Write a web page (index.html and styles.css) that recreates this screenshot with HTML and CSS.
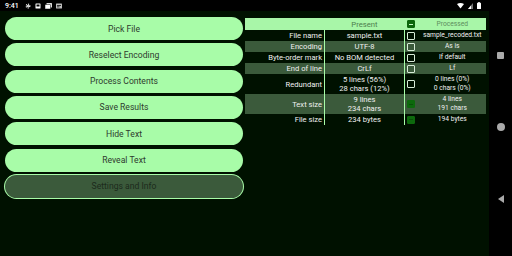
FILE: index.html
```html
<!DOCTYPE html>
<html lang="en">
  <head>
    <meta charset="UTF-8" />
    <meta name="viewport" content="width=device-width, initial-scale=1.0" />
    <title>Recoder</title>
    <link rel="stylesheet" href="styles.css">
  </head>
  <body>
    <div class="statusbar">
      <span class="time">9:41</span>
      <svg class="sicon" width="6" height="6" viewBox="0 0 12 12">
        <circle cx="6" cy="6" r="3.6" fill="none" stroke="#fff" stroke-width="2.4" stroke-dasharray="2 1.8" />
        <circle cx="6" cy="6" r="2.2" fill="#fff" />
      </svg>
      <svg class="sicon" width="6" height="6" viewBox="0 0 12 12">
        <rect x="1" y="1" width="10" height="10" rx="1" fill="#fff" />
        <rect x="3" y="3" width="6" height="4" fill="#000" />
      </svg>
      <svg class="sicon" width="7" height="6" viewBox="0 0 14 12">
        <rect x="3" y="0" width="11" height="9" rx="1" fill="#ddd" />
        <rect x="0" y="3" width="11" height="9" rx="1" fill="#fff" stroke="#000" stroke-width="1" />
      </svg>
      <svg class="sicon" width="6" height="6" viewBox="0 0 12 12">
        <rect x="0" y="1" width="12" height="10" rx="1" fill="#bbb" />
        <rect x="2" y="4" width="8" height="1.5" fill="#000" />
        <rect x="2" y="7" width="5" height="1.5" fill="#000" />
      </svg>
      <span class="spacer"></span>
      <svg class="sicon" width="7" height="6" viewBox="0 0 14 12">
        <path d="M0 2 Q7 -2 14 2 L7 11 Z" fill="#fff" />
      </svg>
      <svg class="sicon" width="5" height="6" viewBox="0 0 10 12">
        <path d="M10 0 L10 12 L0 12 Z" fill="#777" />
        <path d="M6 5 L6 12 L0 12 Z" fill="#fff" />
      </svg>
      <svg class="sicon" width="4" height="7" viewBox="0 0 8 14">
        <rect x="2.5" y="0" width="3" height="2" fill="#fff" />
        <rect x="0" y="1.5" width="8" height="12.5" rx="1" fill="#fff" />
      </svg>
    </div>

    <div class="content">
      <div class="app">
        <div class="buttons">
          <button class="btn">Pick File</button>
          <button class="btn">Reselect Encoding</button>
          <button class="btn">Process Contents</button>
          <button class="btn">Save Results</button>
          <button class="btn">Hide Text</button>
          <button class="btn">Reveal Text</button>
          <button class="btn btn_muted">Settings and Info</button>
        </div>

        <table class="info">
          <tr class="head">
            <td></td>
            <td class="present">Present</td>
            <td class="check"><span class="box box_head"></span></td>
            <td class="processed">Processed</td>
          </tr>
          <tr>
            <td class="label">File name</td>
            <td class="present">sample.txt</td>
            <td class="check"><span class="box"></span></td>
            <td class="processed">sample_recoded.txt</td>
          </tr>
          <tr class="alt">
            <td class="label">Encoding</td>
            <td class="present">UTF-8</td>
            <td class="check"><span class="box"></span></td>
            <td class="processed">As is</td>
          </tr>
          <tr>
            <td class="label">Byte-order mark</td>
            <td class="present">No BOM detected</td>
            <td class="check"><span class="box"></span></td>
            <td class="processed">If default</td>
          </tr>
          <tr class="alt">
            <td class="label">End of line</td>
            <td class="present">CrLf</td>
            <td class="check"><span class="box"></span></td>
            <td class="processed">Lf</td>
          </tr>
          <tr>
            <td class="label">Redundant</td>
            <td class="present">5 lines (56%)<br>28 chars (12%)</td>
            <td class="check"><span class="box"></span></td>
            <td class="processed">0 lines (0%)<br>0 chars (0%)</td>
          </tr>
          <tr class="alt">
            <td class="label">Text size</td>
            <td class="present">9 lines<br>234 chars</td>
            <td class="check"><span class="box box_fixed"></span></td>
            <td class="processed">4 lines<br>191 chars</td>
          </tr>
          <tr>
            <td class="label">File size</td>
            <td class="present">234 bytes</td>
            <td class="check"><span class="box box_fixed"></span></td>
            <td class="processed">194 bytes</td>
          </tr>
        </table>
      </div>

      <div class="navbar">
        <span class="nav_square"></span>
        <span class="nav_circle"></span>
        <span class="nav_back"></span>
      </div>
    </div>
  </body>
</html>
```

FILE: styles.css
```css
html,
body {
  margin: 0;
  padding: 0;
}

body {
  width: 512px;
  height: 256px;
  overflow: hidden;
  background-color: #000;
  font-family: Roboto, "Liberation Sans", sans-serif;
  display: flex;
  flex-direction: column;
}

.statusbar {
  height: 11px;
  display: flex;
  align-items: center;
  gap: 4px;
  padding: 0 31px 0 5px;
  color: #fff;
}

.time {
  font-size: 7px;
  font-weight: 500;
  margin-right: 2px;
}

.sicon {
  display: block;
}

.spacer {
  flex: 1;
}

.content {
  flex: 1;
  display: flex;
}

.app {
  width: 489px;
  background-color: #001100;
  display: flex;
  align-items: flex-start;
  padding: 6px 0 0 5px;
  box-sizing: border-box;
}

.buttons {
  width: 238px;
  display: flex;
  flex-direction: column;
  gap: 3.33px;
}

.btn {
  height: 23px;
  border: none;
  border-radius: 12px;
  background-color: #a8fca8;
  color: #2e3a2e;
  font-family: Roboto, "Liberation Sans", sans-serif;
  font-size: 8.6px;
  padding: 0;
}

.btn_muted {
  background-color: #3b5a3b;
  color: #1c2a1c;
  box-shadow: 0 0 0 1px #a8fca8;
}

.info {
  margin: 1px 0 0 2px;
  width: 241px;
  border-collapse: collapse;
  font-size: 7.6px;
  line-height: 9px;
  color: #f0f0f0;
}

.info td {
  padding: 1px 0;
  text-align: center;
  vertical-align: middle;
}

.info td.label {
  width: 77px;
  text-align: right;
  padding-right: 2px;
  border-right: 1px solid #a8fca8;
}

.info td.present {
  width: 79px;
  border-right: 1px solid #a8fca8;
}

.info td.check {
  width: 12px;
  padding-left: 2px;
  text-align: left;
}

.info td.processed {
  font-size: 6.7px;
}

.info .head td {
  background-color: #a8f6a8;
  height: 10px;
  border-right: none;
}

.info .head .present {
  color: #4d7d4d;
  font-size: 7.7px;
}

.info .head .processed {
  color: #5e8e5e;
}

.alt td {
  background-color: #3b5a3b;
}

.box {
  display: block;
  width: 6px;
  height: 6px;
  border: 1px solid #d8ecd8;
  border-radius: 1px;
  background-color: #001100;
}

.alt .box {
  background-color: #3b5a3b;
}

.box_head {
  background-color: #0b650b;
  border-color: #0b650b;
  position: relative;
}

.box_head::after {
  content: "";
  position: absolute;
  left: 1px;
  right: 1px;
  top: 2.5px;
  height: 1px;
  background-color: #c8f8c8;
}

.box_fixed,
.alt .box_fixed {
  background-color: #0d6a0d;
  border-color: #0d6a0d;
  position: relative;
}

.box_fixed::after {
  content: "";
  position: absolute;
  left: 1px;
  right: 1px;
  top: 2.5px;
  height: 1px;
  background-color: #0a500a;
}

.navbar {
  flex: 1;
  display: flex;
  flex-direction: column;
  align-items: center;
  padding-top: 41px;
  gap: 64px;
}

.nav_square {
  width: 7px;
  height: 7px;
  background-color: #aaa;
  border-radius: 1px;
}

.nav_circle {
  width: 8px;
  height: 8px;
  border-radius: 50%;
  background-color: #aaa;
}

.nav_back {
  width: 0;
  height: 0;
  border-top: 4px solid transparent;
  border-bottom: 4px solid transparent;
  border-right: 6px solid #aaa;
}
```
